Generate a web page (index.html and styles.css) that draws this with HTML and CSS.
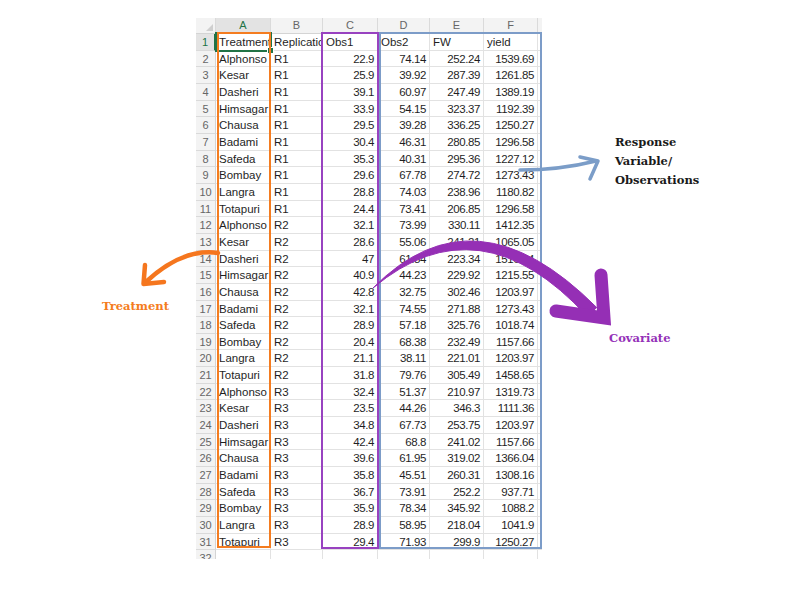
FILE: index.html
```html
<!DOCTYPE html>
<html>
<head>
<meta charset="utf-8">
<link rel="stylesheet" href="styles.css">
</head>
<body>
<div class="canvas">
  <div class="sheet">
    <div class="c h corner"></div><div class="c h hsel">A</div><div class="c h">B</div><div class="c h">C</div><div class="c h">D</div><div class="c h">E</div><div class="c h">F</div><div class="c h"></div>
    <div class="c r rsel">1</div><div class="c">Treatment</div><div class="c">Replication</div><div class="c">Obs1</div><div class="c">Obs2</div><div class="c">FW</div><div class="c">yield</div><div class="c"></div>
    <div class="c r">2</div><div class="c">Alphonso</div><div class="c">R1</div><div class="c n">22.9</div><div class="c n">74.14</div><div class="c n">252.24</div><div class="c n">1539.69</div><div class="c"></div>
    <div class="c r">3</div><div class="c">Kesar</div><div class="c">R1</div><div class="c n">25.9</div><div class="c n">39.92</div><div class="c n">287.39</div><div class="c n">1261.85</div><div class="c"></div>
    <div class="c r">4</div><div class="c">Dasheri</div><div class="c">R1</div><div class="c n">39.1</div><div class="c n">60.97</div><div class="c n">247.49</div><div class="c n">1389.19</div><div class="c"></div>
    <div class="c r">5</div><div class="c">Himsagar</div><div class="c">R1</div><div class="c n">33.9</div><div class="c n">54.15</div><div class="c n">323.37</div><div class="c n">1192.39</div><div class="c"></div>
    <div class="c r">6</div><div class="c">Chausa</div><div class="c">R1</div><div class="c n">29.5</div><div class="c n">39.28</div><div class="c n">336.25</div><div class="c n">1250.27</div><div class="c"></div>
    <div class="c r">7</div><div class="c">Badami</div><div class="c">R1</div><div class="c n">30.4</div><div class="c n">46.31</div><div class="c n">280.85</div><div class="c n">1296.58</div><div class="c"></div>
    <div class="c r">8</div><div class="c">Safeda</div><div class="c">R1</div><div class="c n">35.3</div><div class="c n">40.31</div><div class="c n">295.36</div><div class="c n">1227.12</div><div class="c"></div>
    <div class="c r">9</div><div class="c">Bombay</div><div class="c">R1</div><div class="c n">29.6</div><div class="c n">67.78</div><div class="c n">274.72</div><div class="c n">1273.43</div><div class="c"></div>
    <div class="c r">10</div><div class="c">Langra</div><div class="c">R1</div><div class="c n">28.8</div><div class="c n">74.03</div><div class="c n">238.96</div><div class="c n">1180.82</div><div class="c"></div>
    <div class="c r">11</div><div class="c">Totapuri</div><div class="c">R1</div><div class="c n">24.4</div><div class="c n">73.41</div><div class="c n">206.85</div><div class="c n">1296.58</div><div class="c"></div>
    <div class="c r">12</div><div class="c">Alphonso</div><div class="c">R2</div><div class="c n">32.1</div><div class="c n">73.99</div><div class="c n">330.11</div><div class="c n">1412.35</div><div class="c"></div>
    <div class="c r">13</div><div class="c">Kesar</div><div class="c">R2</div><div class="c n">28.6</div><div class="c n">55.06</div><div class="c n">241.21</div><div class="c n">1065.05</div><div class="c"></div>
    <div class="c r">14</div><div class="c">Dasheri</div><div class="c">R2</div><div class="c n">47</div><div class="c n">61.84</div><div class="c n">223.34</div><div class="c n">1516.44</div><div class="c"></div>
    <div class="c r">15</div><div class="c">Himsagar</div><div class="c">R2</div><div class="c n">40.9</div><div class="c n">44.23</div><div class="c n">229.92</div><div class="c n">1215.55</div><div class="c"></div>
    <div class="c r">16</div><div class="c">Chausa</div><div class="c">R2</div><div class="c n">42.8</div><div class="c n">32.75</div><div class="c n">302.46</div><div class="c n">1203.97</div><div class="c"></div>
    <div class="c r">17</div><div class="c">Badami</div><div class="c">R2</div><div class="c n">32.1</div><div class="c n">74.55</div><div class="c n">271.88</div><div class="c n">1273.43</div><div class="c"></div>
    <div class="c r">18</div><div class="c">Safeda</div><div class="c">R2</div><div class="c n">28.9</div><div class="c n">57.18</div><div class="c n">325.76</div><div class="c n">1018.74</div><div class="c"></div>
    <div class="c r">19</div><div class="c">Bombay</div><div class="c">R2</div><div class="c n">20.4</div><div class="c n">68.38</div><div class="c n">232.49</div><div class="c n">1157.66</div><div class="c"></div>
    <div class="c r">20</div><div class="c">Langra</div><div class="c">R2</div><div class="c n">21.1</div><div class="c n">38.11</div><div class="c n">221.01</div><div class="c n">1203.97</div><div class="c"></div>
    <div class="c r">21</div><div class="c">Totapuri</div><div class="c">R2</div><div class="c n">31.8</div><div class="c n">79.76</div><div class="c n">305.49</div><div class="c n">1458.65</div><div class="c"></div>
    <div class="c r">22</div><div class="c">Alphonso</div><div class="c">R3</div><div class="c n">32.4</div><div class="c n">51.37</div><div class="c n">210.97</div><div class="c n">1319.73</div><div class="c"></div>
    <div class="c r">23</div><div class="c">Kesar</div><div class="c">R3</div><div class="c n">23.5</div><div class="c n">44.26</div><div class="c n">346.3</div><div class="c n">1111.36</div><div class="c"></div>
    <div class="c r">24</div><div class="c">Dasheri</div><div class="c">R3</div><div class="c n">34.8</div><div class="c n">67.73</div><div class="c n">253.75</div><div class="c n">1203.97</div><div class="c"></div>
    <div class="c r">25</div><div class="c">Himsagar</div><div class="c">R3</div><div class="c n">42.4</div><div class="c n">68.8</div><div class="c n">241.02</div><div class="c n">1157.66</div><div class="c"></div>
    <div class="c r">26</div><div class="c">Chausa</div><div class="c">R3</div><div class="c n">39.6</div><div class="c n">61.95</div><div class="c n">319.02</div><div class="c n">1366.04</div><div class="c"></div>
    <div class="c r">27</div><div class="c">Badami</div><div class="c">R3</div><div class="c n">35.8</div><div class="c n">45.51</div><div class="c n">260.31</div><div class="c n">1308.16</div><div class="c"></div>
    <div class="c r">28</div><div class="c">Safeda</div><div class="c">R3</div><div class="c n">36.7</div><div class="c n">73.91</div><div class="c n">252.2</div><div class="c n">937.71</div><div class="c"></div>
    <div class="c r">29</div><div class="c">Bombay</div><div class="c">R3</div><div class="c n">35.9</div><div class="c n">78.34</div><div class="c n">345.92</div><div class="c n">1088.2</div><div class="c"></div>
    <div class="c r">30</div><div class="c">Langra</div><div class="c">R3</div><div class="c n">28.9</div><div class="c n">58.95</div><div class="c n">218.04</div><div class="c n">1041.9</div><div class="c"></div>
    <div class="c r">31</div><div class="c">Totapuri</div><div class="c">R3</div><div class="c n">29.4</div><div class="c n">71.93</div><div class="c n">299.9</div><div class="c n">1250.27</div><div class="c"></div>
    <div class="c r">32</div><div class="c"></div><div class="c"></div><div class="c"></div><div class="c"></div><div class="c"></div><div class="c"></div><div class="c"></div>
  </div>

  <div class="selection"></div>
  <div class="box box-orange"></div>
  <div class="box box-purple"></div>
  <div class="box box-blue"></div>

  <svg class="arrows" width="800" height="600" viewBox="0 0 800 600">
    <path class="a-orange" d="M218 253 Q183 248 147 281"/>
    <path class="a-orange" d="M145 265 L143.5 284 L164 282"/>
    <path class="a-blue" d="M520 170 Q560 170 596 161"/>
    <path class="a-blue" d="M580 157 L598 161 L590 179"/>
    <path class="a-purple-body" d="M373 288 Q474.6 185 596.7 307.5 L587.3 316.5 Q479.4 199 373 288 Z"/>
    <path class="a-purple-head" d="M601 275 L604 318 L556 311"/>
  </svg>

  <div class="label label-response">Response<br>Variable/<br>Observations</div>
  <div class="label label-treatment">Treatment</div>
  <div class="label label-covariate">Covariate</div>
</div>
</body>
</html>
```

FILE: styles.css
```css
html, body {
  margin: 0;
  padding: 0;
  background: #ffffff;
}

.canvas {
  position: relative;
  width: 800px;
  height: 600px;
  overflow: hidden;
  background: #ffffff;
}

.sheet {
  margin: 18px 0 0 196px;
  width: 346px;
  height: 541px;
  overflow: hidden;
  display: grid;
  grid-template-columns: 20px 55px 52px 55px 52px 54px 54px 20px;
  grid-template-rows: 16px;
  grid-auto-rows: 16.67px;
  font-family: "Liberation Sans", Arial, sans-serif;
  font-size: 11.5px;
  color: #1f1f1f;
}

.c {
  box-sizing: border-box;
  border-right: 1px solid #e2e2e2;
  border-bottom: 1px solid #e2e2e2;
  white-space: nowrap;
  overflow: hidden;
  padding: 0 1px 0 3px;
  line-height: 16px;
}

.n {
  text-align: right;
  padding: 0 3px 0 0;
  letter-spacing: -0.4px;
}

.h {
  background: #f3f3f3;
  color: #666666;
  font-size: 11px;
  text-align: center;
  padding: 0;
  line-height: 15px;
  border-right-color: #dadada;
  border-bottom-color: #d4d4d4;
}

.r {
  background: #f3f3f3;
  color: #666666;
  font-size: 11px;
  text-align: center;
  padding: 0;
  border-right-color: #d4d4d4;
  border-bottom-color: #dadada;
}

.corner {
  position: relative;
}

.corner::after {
  content: "";
  position: absolute;
  right: 2px;
  bottom: 2px;
  width: 0;
  height: 0;
  border-left: 7px solid transparent;
  border-bottom: 7px solid #cfcfcf;
}

.hsel {
  background: #e3e3e3;
  color: #217346;
  border-bottom: 2px solid #217346;
}

.rsel {
  background: #e3e3e3;
  color: #217346;
  border-right: 2px solid #217346;
}

.selection {
  position: absolute;
  left: 215px;
  top: 32px;
  width: 57px;
  height: 20px;
  box-sizing: border-box;
  border: 2px solid #217346;
}

.selection::after {
  content: "";
  position: absolute;
  right: -4px;
  bottom: -4px;
  width: 5px;
  height: 5px;
  background: #217346;
  border: 1px solid #ffffff;
}

.box {
  position: absolute;
  top: 32px;
  height: 517px;
  box-sizing: border-box;
  border-width: 2px;
  border-style: solid;
}

.box-orange {
  left: 217px;
  width: 54px;
  height: 516px;
  border-color: #f47c20;
}

.box-purple {
  left: 321px;
  width: 58px;
  border-color: #9842c0;
}

.box-blue {
  left: 379px;
  width: 163px;
  border-color: #7c9cc8;
}

.arrows {
  position: absolute;
  left: 0;
  top: 0;
  pointer-events: none;
}

.a-orange {
  fill: none;
  stroke: #f5761e;
  stroke-width: 4.5;
  stroke-linecap: round;
  stroke-linejoin: round;
}

.a-blue {
  fill: none;
  stroke: #7b9dc8;
  stroke-width: 3.5;
  stroke-linecap: round;
  stroke-linejoin: round;
}

.a-purple-body {
  fill: #952fb5;
  stroke: #952fb5;
  stroke-width: 1;
  stroke-linejoin: round;
}

.a-purple-head {
  fill: none;
  stroke: #952fb5;
  stroke-width: 13;
  stroke-linecap: round;
  stroke-linejoin: miter;
}

.label {
  position: absolute;
  font-family: "DejaVu Serif", "Liberation Serif", serif;
  font-weight: bold;
  font-size: 11.5px;
  line-height: 19px;
  white-space: nowrap;
}

.label-response {
  left: 615px;
  top: 133px;
  color: #1a1a1a;
}

.label-treatment {
  left: 102px;
  top: 297px;
  color: #f47c20;
}

.label-covariate {
  left: 609px;
  top: 329px;
  color: #9431b8;
}
```
